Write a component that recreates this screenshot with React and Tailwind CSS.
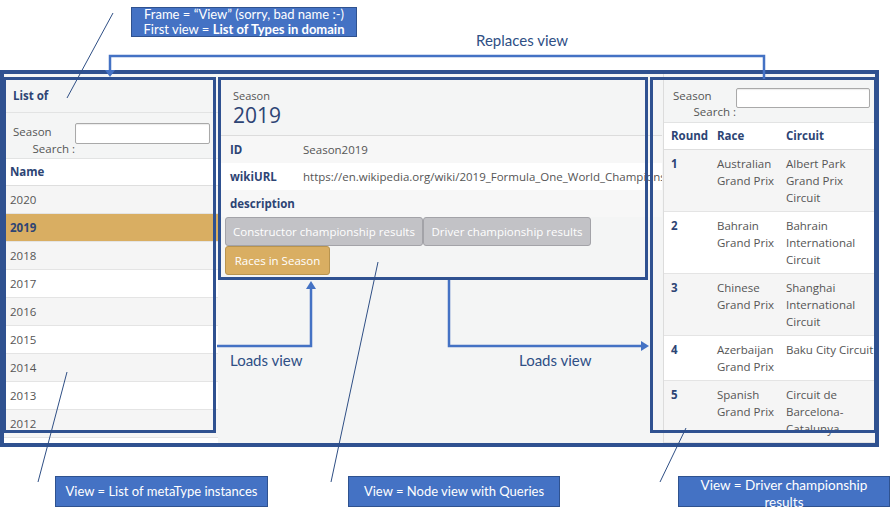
import React from "react";

const seasons = ["2020", "2019", "2018", "2017", "2016", "2015", "2014", "2013", "2012", "2011"];

const races = [
  { round: 1, race: ["Australian", "Grand Prix"], circuit: ["Albert Park", "Grand Prix", "Circuit"] },
  { round: 2, race: ["Bahrain", "Grand Prix"], circuit: ["Bahrain", "International", "Circuit"] },
  { round: 3, race: ["Chinese", "Grand Prix"], circuit: ["Shanghai", "International", "Circuit"] },
  { round: 4, race: ["Azerbaijan", "Grand Prix"], circuit: ["Baku City Circuit"] },
  { round: 5, race: ["Spanish", "Grand Prix"], circuit: ["Circuit de", "Barcelona-", "Catalunya"] },
];

const props = [
  { label: "ID", value: "Season2019", bg: "bg-[#f7f7f7]" },
  { label: "wikiURL", value: "https://en.wikipedia.org/wiki/2019_Formula_One_World_Championship", bg: "bg-white" },
  { label: "description", value: "", bg: "bg-[#f7f7f7]" },
];

function SearchBox({ className, labelW, inputW, inputH, top, lead }) {
  return (
    <div className={`flex items-start bg-[#f4f5f5] border-b border-[#e2e3e3] ${className}`}>
      <div className={`${labelW} text-[#555]`} style={{ paddingTop: top, lineHeight: lead }}>
        <div>Season</div>
        <div className="text-right">Search :</div>
      </div>
      <div
        className={`${inputW} ${inputH} bg-white border border-[#a9a9a9] rounded-[2px] shadow-[inset_0_1px_1px_rgba(0,0,0,0.08)]`}
        style={{ marginTop: top }}
      />
    </div>
  );
}

function Lines({ lines }) {
  return lines.map((l) => <div key={l}>{l}</div>);
}

export default function App() {
  return (
    <div className="relative w-[891px] h-[518px] overflow-hidden bg-white font-['Open_Sans','Noto_Sans',sans-serif] text-[11.5px]">
      {/* screenshot of the app */}
      <div className="pt-[70px]">
        <div className="w-[879px] h-[377px] border-4 border-[#2f5190] bg-[#f4f5f5] flex gap-[1px] overflow-hidden">
          {/* List of metaType instances */}
          <div className="w-[214px] shrink-0 flex flex-col bg-white">
            <div className="h-[39px] shrink-0 pt-[6px] pl-[9px] flex items-center bg-[#f4f5f5] border-b border-[#e2e3e3] font-bold text-[#2d4474]">
              List of
            </div>
            <SearchBox className="h-[46px] shrink-0 pl-[9px]" labelW="w-[62px]" inputW="w-[135px]" inputH="h-[21px]" top={10} lead="17px" />
            <div className="h-[27px] shrink-0 flex items-center pl-[6px] border-b border-[#dedede] font-bold text-[#2d4474]">
              Name
            </div>
            {seasons.map((s, i) => (
              <div
                key={s}
                className={`h-[28px] shrink-0 flex items-center pl-[6px] border-b border-[#e4e4e4] ${
                  s === "2019"
                    ? "bg-[#d9ae62] font-bold text-[#2d4474]"
                    : i % 2 === 0
                    ? "bg-[#f5f5f5] text-[#555]"
                    : "bg-white text-[#555]"
                }`}
              >
                {s}
              </div>
            ))}
          </div>

          {/* Node view with queries */}
          <div className="w-[443px] shrink-0 pl-[1px] flex flex-col overflow-hidden">
            <div className="bg-white">
              <div className="h-[62px] pt-[15px] pl-[13px] bg-[#f4f5f5] border-b border-[#dcdcdc]">
                <div className="text-[11px] leading-[14px] text-[#555]">Season</div>
                <div className="text-[21px] leading-[25px] text-[#2d4474]">2019</div>
              </div>
              {props.map((p) => (
                <div key={p.label} className={`h-[27px] flex items-center pl-[10px] whitespace-nowrap ${p.bg}`}>
                  <div className="w-[73px] shrink-0 font-bold text-[#2d4474]">{p.label}</div>
                  <div className="text-[#555]">{p.value}</div>
                </div>
              ))}
              <div className="bg-[#f4f5f5] pl-[5px] pb-[3px]">
                <div className="flex">
                  <div className="w-[198px] h-[29px] flex items-center justify-center bg-[#c2c2c6] border border-[#a3a3a8] rounded-[3px] text-white whitespace-nowrap">
                    Constructor championship results
                  </div>
                  <div className="w-[168px] h-[29px] flex items-center justify-center bg-[#c2c2c6] border border-[#a3a3a8] rounded-[3px] text-white whitespace-nowrap">
                    Driver championship results
                  </div>
                </div>
                <div className="w-[105px] h-[29px] flex items-center justify-center bg-[#d9ae62] border border-[#b8944f] rounded-[3px] text-white whitespace-nowrap">
                  Races in Season
                </div>
              </div>
            </div>
          </div>

          {/* Driver championship results */}
          <div className="w-[212px] shrink-0 flex flex-col bg-white border-l border-[#dcdcdc]">
            <SearchBox className="h-[49px] shrink-0 pl-[9px]" labelW="w-[63px]" inputW="w-[134px]" inputH="h-[20px]" top={14} lead="16px" />
            <div className="h-[27px] shrink-0 grid grid-cols-[46px_69px_1fr] items-center border-b border-[#dedede] font-bold text-[#2d4474]">
              <div className="pl-[7px]">Round</div>
              <div className="pl-[7px]">Race</div>
              <div className="pl-[7px]">Circuit</div>
            </div>
            {races.map((r, i) => (
              <div
                key={r.round}
                className={`shrink-0 grid grid-cols-[46px_69px_1fr] py-[5px] leading-[17px] border-b border-[#e4e4e4] whitespace-nowrap text-[#555] ${
                  i % 2 === 0 ? "bg-[#f5f5f5]" : "bg-white"
                }`}
              >
                <div className="pl-[7px] font-bold text-[#2d4474]">{r.round}</div>
                <div className="pl-[7px]">
                  <Lines lines={r.race} />
                </div>
                <div className="pl-[7px]">
                  <Lines lines={r.circuit} />
                </div>
              </div>
            ))}
          </div>
        </div>
      </div>

      {/* frames drawn over the views */}
      <div className="absolute left-[3px] top-[77px] w-[213px] h-[356px] border-[3px] border-[#2f5190]" />
      <div className="absolute left-[218px] top-[77px] w-[430px] h-[203px] border-[3px] border-[#2f5190]" />
      <div className="absolute left-[650px] top-[77px] w-[227px] h-[356px] border-[3px] border-[#2f5190]" />

      {/* connectors */}
      <svg className="absolute inset-0 pointer-events-none" width="891" height="518" viewBox="0 0 891 518">
        <polyline points="110,71 110,56 764,56 764,79" fill="none" stroke="#4472c4" strokeWidth="2.5" />
        <polygon points="105,70 115,70 110,77" fill="#4472c4" />
        <polyline points="217,346 311,346 311,288" fill="none" stroke="#4472c4" strokeWidth="2.5" />
        <polygon points="306,289 316,289 311,281" fill="#4472c4" />
        <polyline points="449,280 449,346 642,346" fill="none" stroke="#4472c4" strokeWidth="2.5" />
        <polygon points="641,341 641,351 649,346" fill="#4472c4" />
        <g stroke="#2f4f85" strokeWidth="1">
          <line x1="113" y1="13" x2="67" y2="98" />
          <line x1="67" y1="372" x2="38" y2="482" />
          <line x1="378" y1="262" x2="331" y2="482" />
          <line x1="686" y1="428" x2="660" y2="482" />
        </g>
      </svg>

      {/* annotations */}
      <div className="absolute left-[131px] top-[7px] w-[226px] h-[30px] flex flex-col items-center justify-center bg-[#4472c4] border border-[#2f528f] text-white text-[13px] leading-[15px] font-['Lato',sans-serif] whitespace-nowrap">
        <div>Frame = “View” (sorry, bad name :-)</div>
        <div>
          First view = <span className="font-bold">List of Types in domain</span>
        </div>
      </div>
      <div className="absolute left-[476px] top-[31px] text-[15px] leading-[18px] text-[#2f4f85] font-['Lato',sans-serif]">
        Replaces view
      </div>
      <div className="absolute left-[230px] top-[351px] text-[15px] leading-[18px] text-[#2f4f85] font-['Lato',sans-serif]">
        Loads view
      </div>
      <div className="absolute left-[519px] top-[351px] text-[15px] leading-[18px] text-[#2f4f85] font-['Lato',sans-serif]">
        Loads view
      </div>
      <div className="absolute left-[55px] top-[476px] w-[213px] h-[31px] flex items-center justify-center bg-[#4472c4] border border-[#2f528f] text-white text-[13px] font-['Lato',sans-serif]">
        View = List of metaType instances
      </div>
      <div className="absolute left-[348px] top-[476px] w-[212px] h-[31px] flex items-center justify-center bg-[#4472c4] border border-[#2f528f] text-white text-[13px] font-['Lato',sans-serif]">
        View = Node view with Queries
      </div>
      <div className="absolute left-[678px] top-[476px] w-[212px] h-[31px] bg-[#4472c4] border border-[#2f528f] text-white text-[13.5px] leading-[17px] text-center font-['Lato',sans-serif]">
        View = Driver championship
        <br />
        results
      </div>
    </div>
  );
}
